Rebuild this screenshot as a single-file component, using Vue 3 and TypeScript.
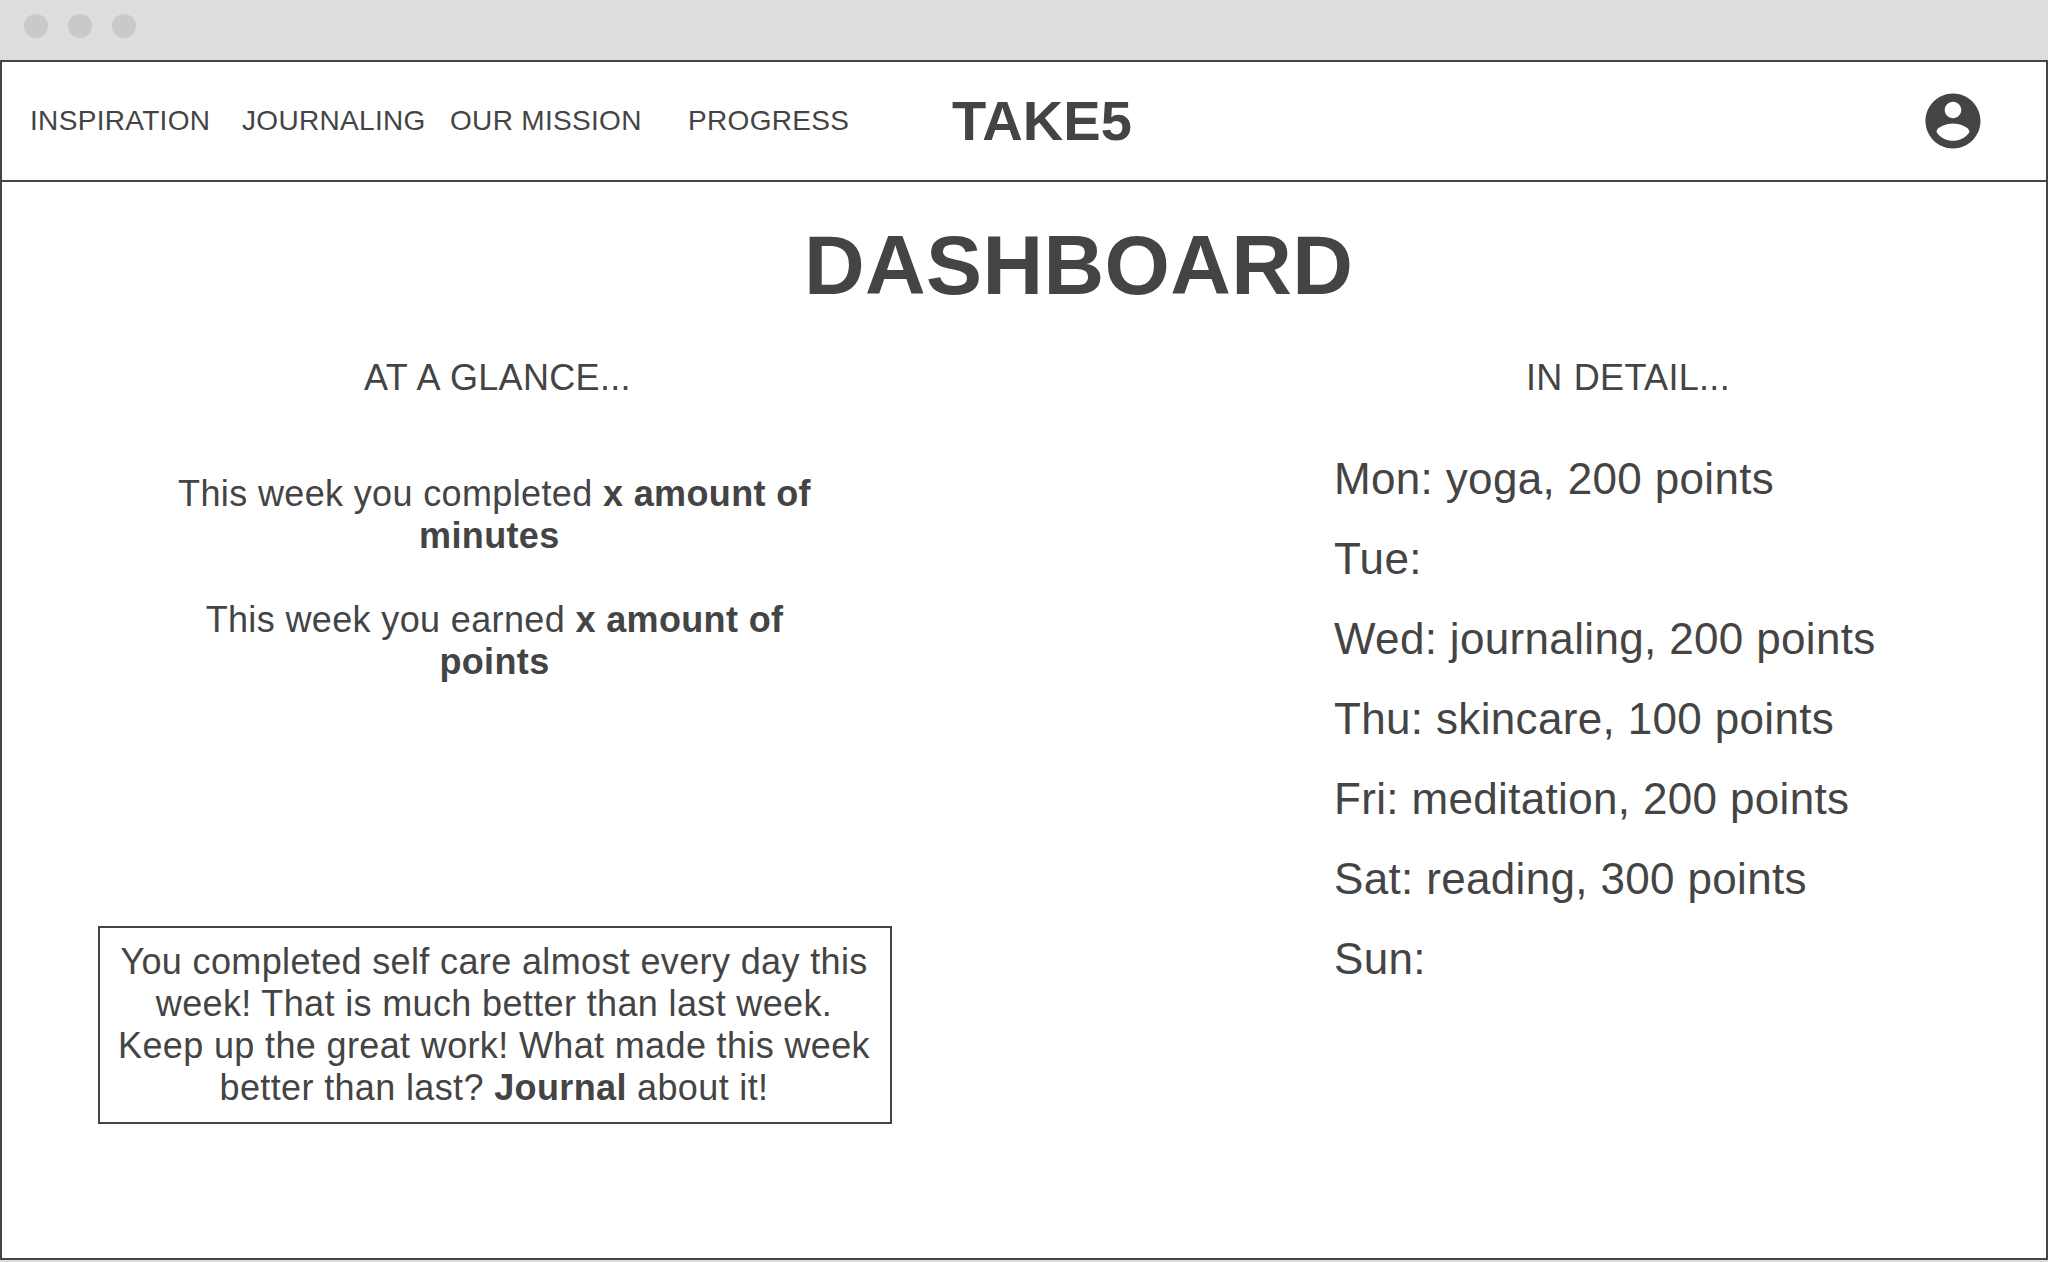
<script setup lang="ts">
interface DayEntry {
  day: string
  detail: string
}

const links: string[] = ['INSPIRATION', 'JOURNALING', 'OUR MISSION', 'PROGRESS']

const days: DayEntry[] = [
  { day: 'Mon', detail: 'yoga, 200 points' },
  { day: 'Tue', detail: '' },
  { day: 'Wed', detail: 'journaling, 200 points' },
  { day: 'Thu', detail: 'skincare, 100 points' },
  { day: 'Fri', detail: 'meditation, 200 points' },
  { day: 'Sat', detail: 'reading, 300 points' },
  { day: 'Sun', detail: '' },
]
</script>

<template>
  <div class="browser">
    <div class="chrome">
      <span class="dot"></span>
      <span class="dot"></span>
      <span class="dot"></span>
    </div>
    <div class="page">
      <header class="header">
        <nav class="nav">
          <a v-for="link in links" :key="link" class="link">{{ link }}</a>
        </nav>
        <div class="brand">TAKE5</div>
        <svg class="account" viewBox="0 0 24 24" aria-label="Account">
          <path
            fill="currentColor"
            d="M12 2C6.48 2 2 6.48 2 12s4.48 10 10 10 10-4.48 10-10S17.52 2 12 2zm0 3c1.66 0 3 1.34 3 3s-1.34 3-3 3-3-1.34-3-3 1.34-3 3-3zm0 14.2c-2.5 0-4.71-1.28-6-3.22.03-1.99 4-3.08 6-3.08 1.99 0 5.97 1.09 6 3.08-1.29 1.94-3.5 3.22-6 3.22z"
          />
        </svg>
      </header>
      <main class="main">
        <h1 class="title">DASHBOARD</h1>
        <div class="columns">
          <section class="glance">
            <h2 class="heading glance-heading">AT A GLANCE...</h2>
            <div class="stats">
              <p class="stat">This week you completed <b>x amount of minutes&nbsp;</b></p>
              <p class="stat">This week you earned <b>x amount of points</b></p>
            </div>
            <p class="note">
              You completed self care almost every day this week! That is much better than last week.
              Keep up the great work! What made this week better than last? <b>Journal</b> about it!
            </p>
          </section>
          <section class="detail">
            <h2 class="heading detail-heading">IN DETAIL...</h2>
            <ul class="days">
              <li v-for="d in days" :key="d.day" class="day">{{ d.day }}: {{ d.detail }}</li>
            </ul>
          </section>
        </div>
      </main>
    </div>
  </div>
</template>

<style>
body {
  margin: 0;
  background: #ddd;
}
</style>

<style scoped>
.browser {
  box-sizing: border-box;
  display: flex;
  flex-direction: column;
  height: 1262px;
  padding-bottom: 2px;
  background: #ddd;
  color: #444;
  font-family: "Liberation Sans", Arial, sans-serif;
}
.chrome {
  box-sizing: border-box;
  display: flex;
  gap: 20px;
  height: 60px;
  padding: 14px 24px;
}
.dot {
  width: 24px;
  height: 24px;
  border-radius: 50%;
  background: #c9c9c9;
}
.page {
  flex: 1;
  border: 2px solid #444;
  background: #fff;
}
.header {
  display: flex;
  align-items: center;
  height: 118px;
  padding-right: 60px;
  border-bottom: 2px solid #444;
}
.nav {
  display: grid;
  grid-template-columns: 212px 208px 238px 264px;
  padding-left: 28px;
  font-size: 28px;
  line-height: 32px;
  letter-spacing: 0.32px;
}
.brand {
  font-size: 56px;
  font-weight: bold;
  line-height: 64px;
  letter-spacing: 0.1px;
}
.account {
  width: 66px;
  height: 66px;
  margin-left: auto;
}
.title {
  margin: 35px 0 0 802px;
  font-size: 84px;
  line-height: 96px;
  letter-spacing: 0.36px;
}
.columns {
  display: flex;
  justify-content: space-between;
  padding: 44px 99px 0 96px;
}
.heading {
  margin: 0;
  font-size: 36px;
  font-weight: normal;
  line-height: 42px;
  letter-spacing: 0.32px;
  word-spacing: 0.8px;
}
.glance {
  width: 794px;
  font-size: 36px;
  line-height: 42px;
  letter-spacing: 0.36px;
}
.glance-heading {
  padding-left: 266px;
}
.stats {
  display: flex;
  flex-direction: column;
  gap: 42px;
  width: 680px;
  margin: 74px auto 0 56.5px;
}
.stat {
  margin: 0;
  text-align: center;
}
.note {
  margin: 243px 0 0;
  padding: 13px 17px 13px 15px;
  border: 2px solid #444;
  text-align: center;
}
.detail {
  width: 613px;
}
.detail-heading {
  padding-left: 192px;
}
.days {
  margin: 40px 0 0;
  padding: 0;
  list-style: none;
  font-size: 44px;
  line-height: 80px;
  letter-spacing: 0.34px;
}
</style>
